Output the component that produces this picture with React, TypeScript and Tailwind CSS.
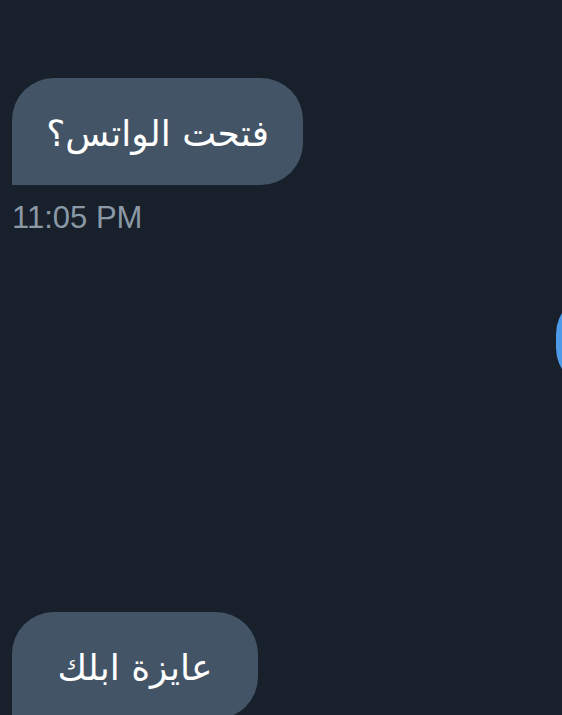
export default function App() {
  return (
    <div className="h-[715px] w-[562px] overflow-hidden bg-[#18202b]">
      <div className="flex flex-col pl-3 pt-[78px]">
        <div className="flex h-[107px] w-[291px] items-center justify-center rounded-[42px] rounded-bl-none bg-[#435466] pt-1">
          <p dir="rtl" className="font-['DejaVu_Sans',sans-serif] text-[36px] leading-none text-white">
            فتحت الواتس؟
          </p>
        </div>
        <p className="mt-[15px] font-['Liberation_Sans',sans-serif] text-[31px] leading-[36px] text-[#8b98a5]">
          11:05 PM
        </p>

        <div className="mt-[58px] flex justify-end">
          <div className="-mr-[200px] h-[94px] w-[206px] rounded-[40px] bg-[#4c9ae8]" />
        </div>

        <div className="mt-[224px] flex h-[107px] w-[246px] items-center justify-center rounded-[42px] rounded-bl-none bg-[#435466] pt-1">
          <p dir="rtl" className="font-['DejaVu_Sans',sans-serif] text-[36px] leading-none text-white">
            عايزة ابلك
          </p>
        </div>
      </div>
    </div>
  );
}
